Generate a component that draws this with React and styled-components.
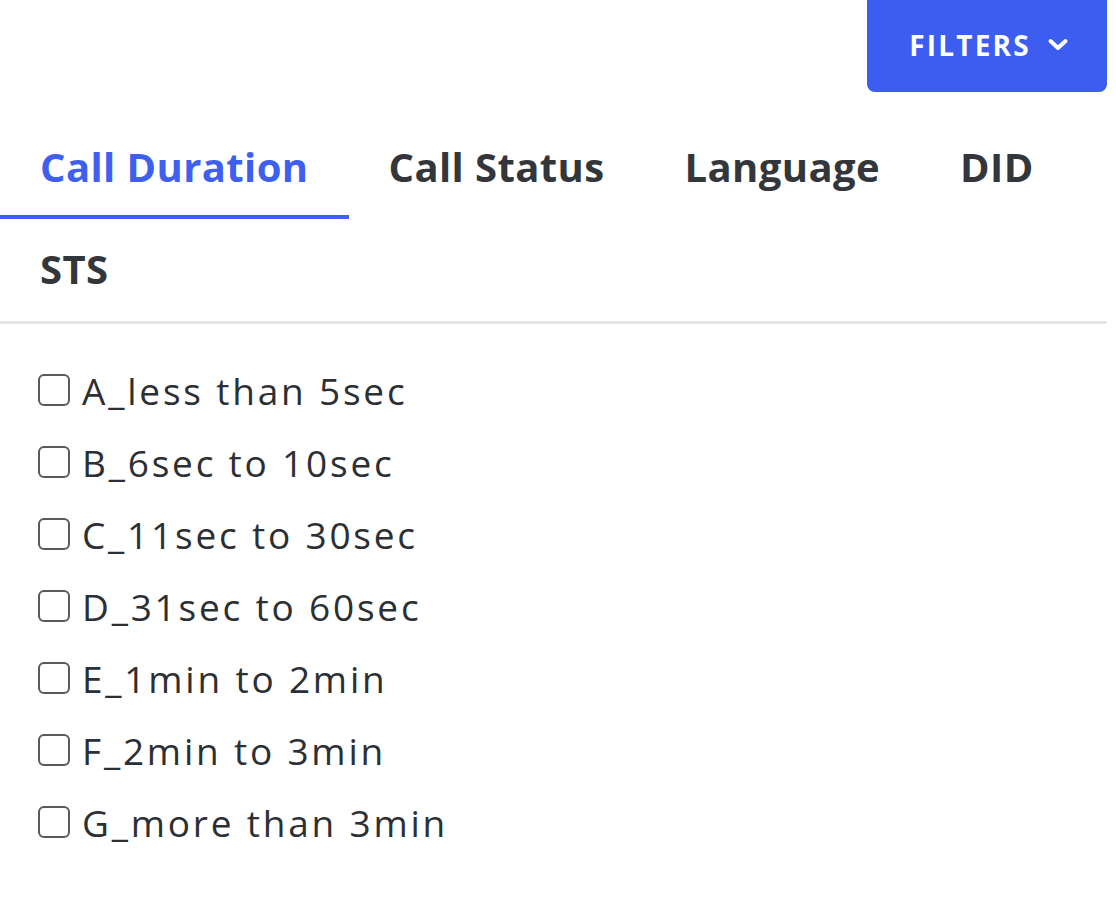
import React, { useState } from "react";
import styled, { createGlobalStyle } from "styled-components";

const GlobalStyle = createGlobalStyle`
  body {
    margin: 0;
    background: #fff;
    font-family: "Open Sans", "Liberation Sans", sans-serif;
  }
`;

const tabs = ["Call Duration", "Call Status", "Language", "DID", "STS"];

const durations = [
  "A_less than 5sec",
  "B_6sec to 10sec",
  "C_11sec to 30sec",
  "D_31sec to 60sec",
  "E_1min to 2min",
  "F_2min to 3min",
  "G_more than 3min",
];

const App = () => {
  const [active, setActive] = useState(0);
  const [checked, setChecked] = useState({});

  return (
    <>
      <GlobalStyle />
      <Wrapper>
        <div className="top-bar">
          <FilterButton>
            FILTERS
            <svg width="22" height="14" viewBox="0 0 22 14">
              <path
                d="M3.5 3 L11 10 L18.5 3"
                fill="none"
                stroke="#fff"
                strokeWidth="4"
                strokeLinecap="round"
                strokeLinejoin="round"
              />
            </svg>
          </FilterButton>
        </div>
        <TabList>
          {tabs.map((t, i) => (
            <Tab key={t} $active={i === active} onClick={() => setActive(i)}>
              {t}
            </Tab>
          ))}
        </TabList>
        <Options>
          {durations.map((d) => (
            <Option key={d}>
              <input
                type="checkbox"
                checked={!!checked[d]}
                onChange={() => setChecked({ ...checked, [d]: !checked[d] })}
              />
              {d}
            </Option>
          ))}
        </Options>
      </Wrapper>
    </>
  );
};

const Wrapper = styled.div`
  width: 1107px;
  .top-bar {
    display: flex;
    justify-content: flex-end;
  }
`;

const FilterButton = styled.button`
  width: 240px;
  height: 92px;
  border: none;
  border-radius: 0 0 8px 8px;
  background-color: #3d5df0;
  color: #fff;
  font-family: "Open Sans", sans-serif;
  font-size: 28px;
  font-weight: 700;
  letter-spacing: 2.2px;
  display: flex;
  align-items: center;
  justify-content: center;
  gap: 16px;
  cursor: pointer;
  padding: 0 0 2px 4px;
`;

const TabList = styled.ul`
  list-style: none;
  margin: 25px 0 0 0;
  padding: 0;
  display: flex;
  flex-wrap: wrap;
  border-bottom: 3px solid #e6e6e8;
`;

const Tab = styled.li`
  height: 98px;
  padding: 0 40px;
  display: flex;
  align-items: center;
  border-bottom: 4px solid ${(p) => (p.$active ? "#3e5ff0" : "transparent")};
  color: ${(p) => (p.$active ? "#3e5ff0" : "#33363b")};
  font-size: 40px;
  font-weight: 700;
  letter-spacing: 0.4px;
  cursor: pointer;
`;

const Options = styled.div`
  padding: 30px 0 0 38px;
  display: flex;
  flex-direction: column;
`;

const Option = styled.label`
  height: 72px;
  display: flex;
  align-items: center;
  gap: 12px;
  font-size: 37px;
  color: #2c2f33;
  letter-spacing: 2.8px;
  cursor: pointer;
  input {
    appearance: none;
    margin: 0;
    width: 32px;
    height: 32px;
    border: 2.5px solid #5a5a5c;
    border-radius: 6px;
    background: #fff;
    box-sizing: border-box;
    cursor: pointer;
    &:checked {
      background: #3e5ff0;
      border-color: #3e5ff0;
    }
  }
`;

export default App;
